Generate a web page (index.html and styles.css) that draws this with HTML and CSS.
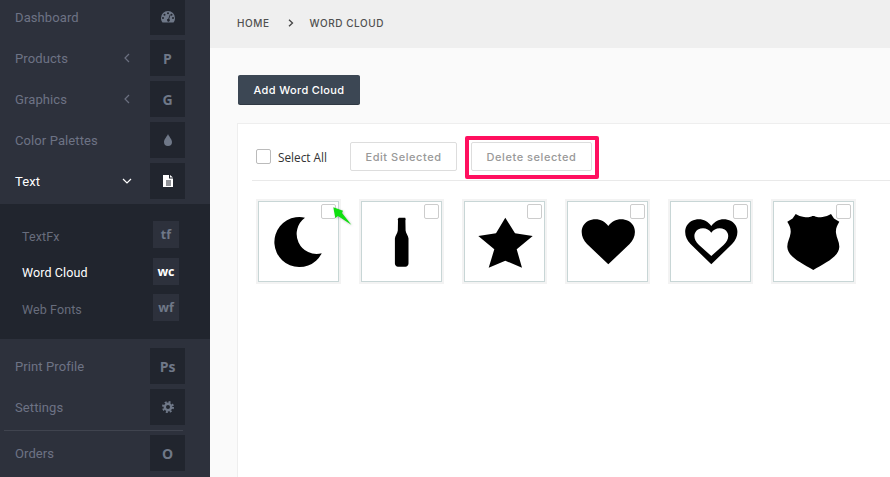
FILE: index.html
```html
<!DOCTYPE html>
<html lang="en">
<head>
<meta charset="utf-8">
<title>Word Cloud</title>
<link rel="stylesheet" href="styles.css">
</head>
<body>
<div class="app">
  <aside class="sidebar">
    <ul class="nav nav-top">
      <li class="nav-item"><span class="nav-label">Dashboard</span><span class="nav-icon"><svg width="14" height="12" viewBox="0 0 14 12"><path fill="#6f7888" fill-rule="evenodd" d="M7 0a7 7 0 0 0-7 7c0 1.700.5 3.400 1.500 4.500h11C13.500 10.400 14 8.700 14 7a7 7 0 0 0-7-7zM7 1.200a1 1 0 1 1 0 2 1 1 0 0 1 0-2zM3.500 2.700a1 1 0 1 1 0 2 1 1 0 0 1 0-2zM10.500 2.700a1 1 0 1 1 0 2 1 1 0 0 1 0-2zM2 6a1 1 0 1 1 0 2 1 1 0 0 1 0-2zM12 6a1 1 0 1 1 0 2 1 1 0 0 1 0-2zM8.800 3.600l.7.300-1.300 4a1.400 1.400 0 1 1-.9-.2z"/></svg></span></li>
      <li class="nav-item"><span class="nav-label">Products</span><svg class="chev" width="8" height="10" viewBox="0 0 8 10"><path d="M6 1 2 5l4 4" fill="none" stroke="#6b7080" stroke-width="1.200"/></svg><span class="nav-icon">P</span></li>
      <li class="nav-item"><span class="nav-label">Graphics</span><svg class="chev" width="8" height="10" viewBox="0 0 8 10"><path d="M6 1 2 5l4 4" fill="none" stroke="#6b7080" stroke-width="1.200"/></svg><span class="nav-icon">G</span></li>
      <li class="nav-item"><span class="nav-label">Color Palettes</span><span class="nav-icon"><svg width="8" height="12" viewBox="0 0 8 12"><path fill="#6f7888" d="M4 0C3.500 2 0 5 0 8a4 4 0 0 0 8 0C8 5 4.500 2 4 0z"/></svg></span></li>
      <li class="nav-item is-active"><span class="nav-label">Text</span><svg class="chev chev-open" width="10" height="8" viewBox="0 0 10 8"><path d="M1 2l4 4 4-4" fill="none" stroke="#fff" stroke-width="1.200"/></svg><span class="nav-icon"><svg width="10" height="12" viewBox="0 0 10 12"><path fill="#fff" fill-rule="evenodd" d="M0 0h6v3.500h4V12H0zM7 0l3 2.600H7zM3 5.500v1h5v-1zM3 7.500v1h5v-1zM3 9.500v1h5v-1z"/></svg></span></li>
    </ul>
    <ul class="subnav">
      <li class="sub-item"><span class="sub-label">TextFx</span><span class="sub-icon">tf</span></li>
      <li class="sub-item is-active"><span class="sub-label">Word Cloud</span><span class="sub-icon">wc</span></li>
      <li class="sub-item"><span class="sub-label">Web Fonts</span><span class="sub-icon">wf</span></li>
    </ul>
    <ul class="nav nav-bottom">
      <li class="nav-item"><span class="nav-label">Print Profile</span><span class="nav-icon">Ps</span></li>
      <li class="nav-item"><span class="nav-label">Settings</span><span class="nav-icon"><svg width="12" height="12" viewBox="0 0 12 12"><circle cx="6" cy="6" r="3.200" fill="none" stroke="#6f7888" stroke-width="2.400"/><circle cx="6" cy="6" r="5" fill="none" stroke="#6f7888" stroke-width="2" stroke-dasharray="1.960 1.970"/></svg></span></li>
      <li class="nav-item nav-item-ruled"><span class="nav-label">Orders</span><span class="nav-icon">O</span></li>
    </ul>
  </aside>

  <main class="main">
    <nav class="crumbs"><span>HOME</span><svg class="crumb-sep" width="6" height="8" viewBox="0 0 6 8"><path d="M1 .8 4.500 4 1 7.200" fill="none" stroke="#444" stroke-width="1.300"/></svg><span>WORD CLOUD</span></nav>
    <div class="content">
      <button class="btn-add" type="button">Add Word Cloud</button>
      <section class="card">
        <div class="toolbar">
          <label class="select-all"><span class="check"></span>Select All</label>
          <button class="btn-ghost btn-edit" type="button">Edit Selected</button>
          <span class="highlight-wrap">
            <button class="btn-ghost btn-delete" type="button">Delete selected</button>
            <span class="highlight"></span>
          </span>
        </div>
        <div class="tiles">
          <div class="tile"><span class="check check-tile"></span>
            <svg class="shape" viewBox="0 0 80 80"><path d="M47 16.700A25 25 0 1 0 63.700 52.300 20 20 0 0 1 47 16.700z"/></svg>
            <svg class="pointer" width="22" height="22" viewBox="0 0 22 22"><path fill="#0fdf0f" d="M2.300 1.300 12 4.700 11 7 20.300 18.700 7 10 4.300 12z"/></svg>
          </div>
          <div class="tile"><span class="check check-tile"></span>
            <svg class="shape" viewBox="0 0 80 80"><path d="M37.800 16.700h6.400l.5 1.500-.3 1.300.2 10c.2 3 2.700 5 2.900 8v25c0 2-1.500 3.200-3 3.200h-7.600c-1.500 0-3-1.200-3-3.200v-25c.2-3 2.700-5 2.900-8l.2-10-.3-1.300z"/></svg>
          </div>
          <div class="tile"><span class="check check-tile"></span>
            <svg class="shape" viewBox="0 0 80 80"><path d="M41.300 16.700 51 32.300 68.700 35 52.700 48.300 58 66.700 41.300 59.700 24.700 66.700 30.300 48.300 14.300 35 32 32.300z"/></svg>
          </div>
          <div class="tile"><span class="check check-tile"></span>
            <svg class="shape" viewBox="0 0 80 80"><path d="M41.300 63.300 20 43C13 36 12.500 25 21 20c8-4 16-1 20.300 5C45.600 19 53.600 16 61.600 20c8.500 5 8 16 1 23z"/></svg>
          </div>
          <div class="tile"><span class="check check-tile"></span>
            <svg class="shape" viewBox="0 0 80 80"><path fill-rule="evenodd" d="M41.300 63.300 20.500 43C13.500 36 13 25 21.500 20c8-4 15.500-1 19.800 5C45.600 19 53.100 16 61.100 20c8.500 5 8 16 1 23zM41.300 55 29 44c-6-6-6-12-1-15.500 5-2.500 10.500-1 13.300 3.200 2.800-4.200 8.300-5.700 13.300-3.200 5 3.500 5 9.500-1 15.500z"/></svg>
          </div>
          <div class="tile"><span class="check check-tile"></span>
            <svg class="shape" viewBox="0 0 80 80"><path d="M22.700 13C25 14.500 28 15.700 31 16c2 .3 4 .5 5.500 0 1.500-.3 2.500-1 3.800-1s2.300.7 3.700 1c1.500.5 3.500.3 5.500 0 3-.3 6-1.500 8.500-3l3 4.500 5.300 3.200C64 25 62.500 27 63 32c.5 5 3.500 9 3.300 14-.5 10-14.300 16-26 23C28.600 62 14.800 56 14.300 46c-.2-5 2.800-9 3.300-14 .5-5-1-7-3.300-11.300l5.300-3.200z"/></svg>
          </div>
        </div>
      </section>
    </div>
  </main>
</div>
</body>
</html>
```
FILE: styles.css
```css
* { box-sizing: border-box; }
html, body { margin: 0; height: 100%; overflow: hidden; }
body { font-family: "Roboto", "Liberation Sans", sans-serif; background: #fafafa; }
ul { list-style: none; margin: 0; padding: 0; }
.app { display: flex; width: 890px; height: 477px; overflow: hidden; }

.sidebar { flex: 0 0 210px; background: #2d313c; height: 477px; }
.nav { display: flex; flex-direction: column; gap: 5px; }
.nav-top { margin-top: -1px; padding-bottom: 5px; }
.nav-bottom { padding-top: 9px; }
.nav-item { display: flex; align-items: center; height: 36px; padding-left: 15px; width: 185px; font-size: 13px; letter-spacing: .1px; color: #6d7385; position: relative; }
.nav-label { flex: 1; padding-top: 1px; }
.chev { margin-right: 19px; }
.chev-open { margin-right: 18px; margin-top: -1px; }
.nav-icon { flex: 0 0 35px; height: 36px; background: #21252e; display: flex; align-items: center; justify-content: center; font-family: "Open Sans", sans-serif; font-weight: 700; font-size: 14px; letter-spacing: 0; color: #6f7888; }
.nav-item.is-active, .nav-item.is-active .nav-icon { color: #fff; }
.nav-item-ruled { margin-top: 5px; }
.nav-item-ruled::before { content: ""; position: absolute; left: 4px; right: 2px; top: -5px; height: 1px; background: #40444f; }

.subnav { background: #21252e; height: 135px; padding: 17px 0 0 22px; display: flex; flex-direction: column; gap: 9.500px; }
.sub-item { display: flex; align-items: center; height: 27px; font-size: 12.500px; letter-spacing: .1px; color: #686d7d; width: 157px; }
.sub-label { flex: 1; padding-top: 3px; }
.sub-icon { flex: 0 0 26px; height: 27px; background: #2d313c; display: flex; align-items: center; justify-content: center; font-family: "Open Sans", sans-serif; font-weight: 700; font-size: 12.500px; letter-spacing: 0; color: #6f7888; }
.sub-item.is-active, .sub-item.is-active .sub-icon { color: #fff; }

.main { flex: 1; min-width: 0; display: flex; flex-direction: column; }
.crumbs { height: 48px; flex: none; background: #efefef; padding: 0 0 3px 27px; display: flex; align-items: center; font-family: "Inter", sans-serif; font-size: 10px; font-weight: 500; letter-spacing: .55px; color: #505050; }
.crumb-sep { margin: 0 15px 0 19px; }
.content { flex: 1; padding: 27px 0 0 27px; display: flex; flex-direction: column; align-items: flex-start; }
.btn-add { width: 122px; height: 29px; margin-left: 1px; border: 0; border-radius: 2px; background: #3c4754; color: #fff; font-family: "Inter", sans-serif; font-size: 11px; font-weight: 500; letter-spacing: .35px; padding: 0; box-shadow: 0 1px 0 #2f3843; }
.card { margin-top: 19px; width: 653px; flex: 1; background: #fff; border: 1px solid #eee; border-width: 1px 0 0 1px; padding: 18px 0 0 14px; }
.toolbar { display: flex; align-items: flex-start; height: 39px; padding-left: 4px; border-bottom: 1px solid #e9e9e9; }
.select-all { flex: 0 0 94px; height: 29px; display: flex; align-items: center; gap: 7px; font-family: "Open Sans", sans-serif; font-size: 11.800px; color: #333; }
.check { display: block; flex: none; width: 15px; height: 15px; background: #fff; border: 1px solid #bbb; border-radius: 2px; }
.btn-ghost { height: 29px; padding: 0; background: #fff; border: 1px solid #ddd; border-radius: 2px; color: #999; font-family: "Inter", sans-serif; font-size: 11px; font-weight: 500; letter-spacing: .55px; }
.btn-edit { width: 107px; }
.highlight-wrap { position: relative; margin-left: 14px; display: block; height: 29px; }
.btn-delete { width: 121px; }
.highlight { position: absolute; left: -6px; top: -6px; width: 134px; height: 43px; border: 4px solid #ff0f5f; border-radius: 2px; }

.tiles { display: flex; gap: 18px; padding: 18px 0 0 4px; }
.tile { position: relative; width: 85px; height: 85px; flex: none; border: 2px solid #f3f3f3; outline: 1px solid #c8d6d6; outline-offset: -3px; background: #fff; }
.shape { position: absolute; left: 0; top: 0; width: 80px; height: 80px; display: block; }
.check-tile { position: absolute; right: 3px; top: 3px; border-color: #ccc; z-index: 1; }
.pointer { position: absolute; left: 73px; top: 5px; z-index: 2; filter: drop-shadow(1px 1px 1px rgba(0,0,0,.25)); }
```
